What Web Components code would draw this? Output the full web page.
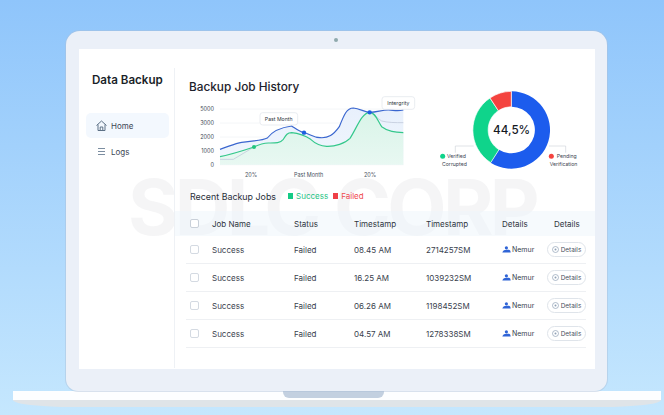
<!DOCTYPE html>
<html>
<head>
<meta charset="utf-8">
<style>
  html, body { margin: 0; height: 100%; }
  body {
    width: 664px;
    height: 415px;
    overflow: hidden;
    background: linear-gradient(#8fc5fb, #c5e7fe);
    font-family: Inter, "Liberation Sans", sans-serif;
  }
</style>
</head>
<body>
<laptop-frame>
  <side-bar slot="side">
    <nav-item active icon="home">Home</nav-item>
    <nav-item icon="logs">Logs</nav-item>
  </side-bar>
  <main-panel slot="main">
    <top-charts>
      <history-chart></history-chart>
      <donut-chart></donut-chart>
    </top-charts>
    <jobs-table></jobs-table>
  </main-panel>
</laptop-frame>

<script>
class LaptopFrame extends HTMLElement {
  constructor() {
    super();
    this.attachShadow({mode: 'open'});
    this.shadowRoot.innerHTML = `
    <style>
      :host { display: flex; flex-direction: column; align-items: center; padding: 31px 0 0 9px; }
      .lid {
        box-sizing: border-box;
        width: 541px;
        height: 360px;
        padding: 18px 12px 22px 13px;
        background: #ebf0f8;
        border-radius: 14px 14px 12px 12px;
        box-shadow: 0 0 0 1px rgba(170, 190, 215, .45);
        position: relative;
      }
      .camera {
        position: absolute;
        top: 7px;
        left: 268px;
        width: 4px;
        height: 4px;
        border-radius: 50%;
        background: #8fa9ad;
      }
      .screen {
        position: relative;
        display: flex;
        height: 320px;
        background: #fff;
        overflow: hidden;
      }
      .mark {
        position: absolute;
        left: 49px;
        top: 118px;
        font-size: 77px;
        line-height: 80px;
        font-weight: 700;
        letter-spacing: -3.7px;
        word-spacing: 2px;
        white-space: nowrap;
        color: rgba(120, 125, 135, .075);
      }
      .base {
        width: 648px;
        height: 9px;
        background: #fdfeff;
        display: flex;
        justify-content: center;
      }
      .notch {
        width: 101px;
        height: 7px;
        margin-right: 6px;
        background: #c3d0e0;
        border-radius: 0 0 6px 6px;
      }
      .under {
        width: 648px;
        height: 7px;
        background: #dfe4e8;
        border-radius: 0 0 60px 60px / 0 0 7px 7px;
      }
    </style>
    <div class="lid">
      <div class="camera"></div>
      <div class="screen">
        <div class="mark">SDLC CORP</div>
        <slot name="side"></slot>
        <slot name="main"></slot>
      </div>
    </div>
    <div class="base"><div class="notch"></div></div>
    <div class="under"></div>
    `;
  }
}

class SideBar extends HTMLElement {
  constructor() {
    super();
    this.attachShadow({mode: 'open'});
    this.shadowRoot.innerHTML = `
    <style>
      :host {
        display: block;
        box-sizing: border-box;
        width: 96px;
        height: 300px;
        margin-top: 19px;
        padding: 0 5px 0 7px;
        border-right: 1px solid #eef1f5;
        position: relative;
      }
      h1 {
        margin: 0 0 21px 6px;
        font-size: 11.6px;
        line-height: 24px;
        font-weight: 600;
        color: #1a1f29;
        white-space: nowrap;
      }
      .items { display: flex; flex-direction: column; gap: 1px; }
    </style>
    <h1>Data Backup</h1>
    <div class="items"><slot></slot></div>
    `;
  }
}

const NAV_ICONS = {
  home: '<path d="M1.5 6.5 6.5 2l5 4.5M3 5.5V11.5h7V5.5M5.2 11.5V8h2.6v3.5" fill="none" stroke="#5d7186" stroke-width="1"/>',
  logs: '<path d="M3 3.5h7M3 6.5h7M3 9.5h7" stroke="#7c8ea1" stroke-width="1"/>'
};

class NavItem extends HTMLElement {
  constructor() {
    super();
    this.attachShadow({mode: 'open'});
    const active = this.hasAttribute('active');
    this.shadowRoot.innerHTML = `
    <style>
      :host {
        display: flex;
        align-items: center;
        gap: 3px;
        height: 25px;
        padding-left: 9px;
        border-radius: 5px;
        font-size: 8px;
        color: #3c4654;
        background: ${active ? '#f3f8fe' : 'transparent'};
      }
      svg { width: 13px; height: 13px; }
    </style>
    <svg viewBox="0 0 13 13">${NAV_ICONS[this.getAttribute('icon')]}</svg>
    <slot></slot>
    `;
  }
}

class MainPanel extends HTMLElement {
  constructor() {
    super();
    this.attachShadow({mode: 'open'});
    this.shadowRoot.innerHTML = `
    <style>
      :host { display: flex; flex-direction: column; flex: 1; min-width: 0; position: relative; }
    </style>
    <slot></slot>
    `;
  }
}

class TopCharts extends HTMLElement {
  constructor() {
    super();
    this.attachShadow({mode: 'open'});
    this.shadowRoot.innerHTML = `
    <style>
      :host { display: flex; box-sizing: border-box; height: 133px; padding: 28px 0 0 5px; }
    </style>
    <slot></slot>
    `;
  }
}

class HistoryChart extends HTMLElement {
  constructor() {
    super();
    this.attachShadow({mode: 'open'});
    const blue = 'M120 238C150 228 165 220 185 217C215 212 245 213 262 204C280 180 305 172 335 168C350 178 360 186 372 188C390 192 400 203 420 203C445 205 460 195 478 170C492 135 500 114 520 114C540 116 555 127 570 127C590 127 605 120 625 120C640 120 650 125 670 120';
    const green = 'M120 260C150 254 195 240 222 231C240 222 250 219 265 219C285 219 300 220 310 208C318 195 322 188 335 188C355 190 380 200 392 208C405 220 420 228 440 229C465 230 495 220 510 205C530 175 545 127 570 127C585 127 592 150 605 170C625 185 645 187 670 188';
    const grey = 'M120 268H160L222 231M570 127C585 135 592 145 605 153C625 158 645 158 670 158';
    const gridY = [117, 159, 201, 242, 284];
    const labels = ['5000', '3000', '2000', '1000', '0'];
    this.shadowRoot.innerHTML = `
    <style>
      :host { display: block; flex: none; width: 245px; }
      h2 {
        margin: 0 0 0 9px;
        font-size: 11.8px;
        line-height: 20px;
        font-weight: 500;
        color: #1d222c;
        white-space: nowrap;
      }
      svg { display: block; width: 245px; height: 90px; margin-top: -2px; font-family: Inter, "Liberation Sans", sans-serif; }
    </style>
    <h2>Backup Job History</h2>
    <svg viewBox="0 75 735 270">
      <defs>
        <linearGradient id="fillBlue" x1="0" y1="0" x2="0" y2="1">
          <stop offset="0" stop-color="#e8f0fc"/><stop offset="1" stop-color="#f0f6fd"/>
        </linearGradient>
        <linearGradient id="fillGreen" x1="0" y1="0" x2="0" y2="1">
          <stop offset="0" stop-color="#d9f4e8"/><stop offset="1" stop-color="#e8f8f2"/>
        </linearGradient>
      </defs>
      ${gridY.map((y, i) => `
        <line x1="120" x2="670" y1="${y}" y2="${y}" stroke="#eef1f5" stroke-width="2"/>
        <text x="102" y="${y + 6}" text-anchor="end" font-size="16.5" fill="#3f4855">${labels[i]}</text>`).join('')}
      <path d="${blue}V284H120Z" fill="url(#fillBlue)"/>
      <path d="${green}V284H120Z" fill="url(#fillGreen)"/>
      <path d="${grey}" fill="none" stroke="#c3cbdc" stroke-width="2.5"/>
      <path d="${green}" fill="none" stroke="#34c88b" stroke-width="3.5"/>
      <path d="${blue}" fill="none" stroke="#3a66cf" stroke-width="3.5"/>
      <circle cx="222" cy="231" r="6" fill="#22c57e"/>
      <circle cx="372" cy="188" r="6.5" fill="#1d5fe0"/>
      <circle cx="569" cy="127" r="6.5" fill="#1d5fe0"/>
      <rect x="240" y="128" width="113" height="37" rx="8" fill="#fff" stroke="#dfe4ea" stroke-width="2"/>
      <text x="296" y="153" text-anchor="middle" font-size="15.5" fill="#2e3540">Past Month</text>
      <rect x="606" y="80" width="98" height="38" rx="8" fill="#fff" stroke="#dfe4ea" stroke-width="2"/>
      <text x="655" y="104" text-anchor="middle" font-size="15.5" fill="#2e3540">Intergrity</text>
      <text x="213" y="320" text-anchor="middle" font-size="16.5" fill="#4a5361">20%</text>
      <text x="386" y="320" text-anchor="middle" font-size="16.5" fill="#4a5361">Past Month</text>
      <text x="570" y="320" text-anchor="middle" font-size="16.5" fill="#4a5361">20%</text>
    </svg>
    `;
  }
}

class DonutChart extends HTMLElement {
  constructor() {
    super();
    this.attachShadow({mode: 'open'});
    this.shadowRoot.innerHTML = `
    <style>
      :host { display: block; flex: none; width: 165px; margin-top: -2px; }
      svg { display: block; width: 165px; height: 110px; font-family: Inter, "Liberation Sans", sans-serif; }
    </style>
    <svg viewBox="0 0 495 330">
      <path d="M260 49A116 116 0 1 1 197 263L222 224A70 70 0 1 0 260 95Z" fill="#1c5ced"/>
      <path d="M197 263A116 116 0 0 1 195 69L220 107A70 70 0 0 0 222 224Z" fill="#0fd48b" stroke="#fff" stroke-width="2"/>
      <path d="M195 69A116 116 0 0 1 259 49V95A70 70 0 0 0 220 107Z" fill="#f4433f" stroke="#fff" stroke-width="2"/>
      <text x="260" y="177" text-anchor="middle" font-size="35" font-weight="500" fill="#15191f">44,5%</text>
      <path d="M91 233V213H146M422 233V213H372" fill="none" stroke="#d0d5db" stroke-width="2"/>
      <circle cx="53" cy="244" r="7.5" fill="#0fd48b"/>
      <text x="66" y="250" font-size="15.5" fill="#3b4450">Verified</text>
      <text x="51" y="274" font-size="15.5" fill="#3b4450">Corrupted</text>
      <circle cx="379" cy="244" r="7.5" fill="#f4433f"/>
      <text x="395" y="250" font-size="15.5" fill="#3b4450">Pending</text>
      <text x="374" y="274" font-size="15.5" fill="#3b4450">Verification</text>
    </svg>
    `;
  }
}

const COLS = '22px 82px 60px 72px 76px 45px 39px';

class JobRow extends HTMLElement {
  constructor() {
    super();
    this.attachShadow({mode: 'open'});
    const [a, b, c, d] = this.getAttribute('cells').split('|');
    this.shadowRoot.innerHTML = `
    <style>
      :host {
        display: grid;
        grid-template-columns: ${COLS};
        align-items: center;
        height: 27px;
        margin: 0 9px 0 11px;
        padding-left: 4px;
        border-bottom: 1px solid #eef0f3;
        font-size: 8px;
        color: #39414d;
        white-space: nowrap;
      }
      .check {
        box-sizing: border-box;
        width: 9px;
        height: 9px;
        border: 1px solid #d4dae2;
        border-radius: 2px;
        background: #fff;
      }
      .user { display: flex; align-items: center; gap: 1px; font-size: 7px; }
      .user svg { width: 9px; height: 7px; }
      .btn {
        display: flex;
        align-items: center;
        justify-content: center;
        gap: 2px;
        box-sizing: border-box;
        width: 39px;
        height: 15px;
        border: 1px solid #dfe4ea;
        border-radius: 8px;
        font-size: 6.4px;
        background: #fff;
        color: #4a5361;
      }
      .btn svg { width: 7px; height: 7px; }
    </style>
    <div class="check"></div>
    <div>${a}</div>
    <div>${b}</div>
    <div>${c}</div>
    <div>${d}</div>
    <div class="user">
      <svg viewBox="0 0 9 7"><circle cx="4.4" cy="1.8" r="1.6" fill="#2f64d6"/><path d="M0.3 6.6C.8 4.5 2.8 3.8 4.3 3.8H6.8C8 3.8 8.5 5 8.7 6.6Z" fill="#2f64d6"/></svg>
      <span>Nemur</span>
    </div>
    <div class="btn">
      <svg viewBox="0 0 7 7"><circle cx="3.5" cy="3.5" r="3" fill="none" stroke="#8fa0b5" stroke-width=".7"/><circle cx="3.5" cy="3.5" r="1" fill="#8fa0b5"/></svg>
      <span>Details</span>
    </div>
    `;
  }
}

class JobsTable extends HTMLElement {
  constructor() {
    super();
    this.attachShadow({mode: 'open'});
    const rows = [
      ['Success', 'Failed', '08.45 AM', '2714257SM'],
      ['Success', 'Failed', '16.25 AM', '1039232SM'],
      ['Success', 'Failed', '06.26 AM', '1198452SM'],
      ['Success', 'Failed', '04.57 AM', '1278338SM']
    ];
    this.shadowRoot.innerHTML = `
    <style>
      :host { display: block; }
      .title {
        display: flex;
        align-items: center;
        height: 20px;
        margin-top: 4px;
        padding-left: 15px;
        font-size: 8.9px;
        color: #2a303a;
        white-space: nowrap;
      }
      .legend { display: flex; align-items: center; margin-left: 12px; gap: 3px; font-size: 8px; }
      .legend i { width: 5px; height: 6px; display: block; }
      .ok { color: #1fc486; }
      .bad { color: #ef4a50; }
      .legend.bad { margin-left: 5px; }
      .head {
        display: grid;
        grid-template-columns: ${COLS};
        align-items: center;
        height: 25px;
        margin-top: 5px;
        padding-left: 15px;
        background: rgba(238, 245, 252, .5);
        font-size: 8px;
        color: #2f3641;
        white-space: nowrap;
      }
      .check {
        box-sizing: border-box;
        width: 9px;
        height: 9px;
        border: 1px solid #c9d0d9;
        border-radius: 2px;
        background: #fff;
      }
    </style>
    <div class="title">
      <span>Recent Backup Jobs</span>
      <span class="legend"><i style="background:#14cb85"></i><span class="ok">Success</span></span>
      <span class="legend bad"><i style="background:#ef3f47"></i><span>Failed</span></span>
    </div>
    <div class="head">
      <div class="check"></div>
      <div>Job Name</div>
      <div>Status</div>
      <div>Timestamp</div>
      <div>Timestamp</div>
      <div>Details</div>
      <div style="padding-left:7px">Details</div>
    </div>
    ${rows.map(r => `<job-row cells="${r.join('|')}"></job-row>`).join('')}
    `;
  }
}

customElements.define('laptop-frame', LaptopFrame);
customElements.define('side-bar', SideBar);
customElements.define('nav-item', NavItem);
customElements.define('main-panel', MainPanel);
customElements.define('top-charts', TopCharts);
customElements.define('history-chart', HistoryChart);
customElements.define('donut-chart', DonutChart);
customElements.define('job-row', JobRow);
customElements.define('jobs-table', JobsTable);
</script>
</body>
</html>
